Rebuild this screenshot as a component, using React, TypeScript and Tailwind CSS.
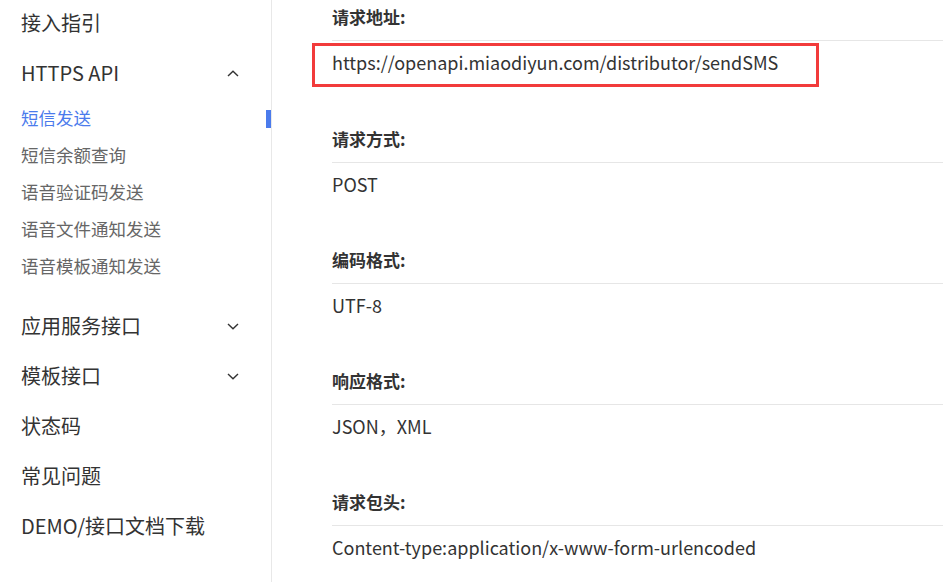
import React from 'react';

const font = { fontFamily: '"Noto Sans CJK SC", sans-serif' };

const ChevronUp = () => (
  <svg width="12" height="7" viewBox="0 0 12 7" fill="none" className="text-[#333]">
    <path d="M1 6L6 1.2L11 6" stroke="currentColor" strokeWidth="1.4" />
  </svg>
);

const ChevronDown = () => (
  <svg width="12" height="7" viewBox="0 0 12 7" fill="none" className="text-[#333]">
    <path d="M1 1L6 5.8L11 1" stroke="currentColor" strokeWidth="1.4" />
  </svg>
);

const subItems = ['短信发送', '短信余额查询', '语音验证码发送', '语音文件通知发送', '语音模板通知发送'];

const sections = [
  { title: '请求方式:', value: 'POST' },
  { title: '编码格式:', value: 'UTF-8' },
  { title: '响应格式:', value: 'JSON，XML' },
  { title: '请求包头:', value: 'Content-type:application/x-www-form-urlencoded' },
];

const App: React.FC = () => {
  return (
    <div className="flex h-[582px] w-[943px] overflow-hidden bg-white" style={font}>
      {/* Sidebar */}
      <aside className="w-[272px] shrink-0 border-r border-[#e8e8e8] text-[#333]">
        <div className="flex h-[46px] items-center pl-[21px] text-[20px]">接入指引</div>
        <div className="flex h-[54px] items-center justify-between pl-[21px] pr-[32px] text-[20px]">
          <span>HTTPS API</span>
          <ChevronUp />
        </div>
        <div className="flex flex-col">
          {subItems.map((item, i) => (
            <div key={item} className="flex h-[37px] items-center justify-between pl-[21px] text-[17.5px]">
              <span className={i === 0 ? 'text-[#4b7bec]' : 'text-[#666]'}>{item}</span>
              {i === 0 && <span className="h-[18px] w-[5px] bg-[#4b7bec]" />}
            </div>
          ))}
        </div>
        <div className="mt-[16px] flex h-[50px] items-center justify-between pl-[21px] pr-[32px] text-[20px]">
          <span>应用服务接口</span>
          <ChevronDown />
        </div>
        <div className="flex h-[50px] items-center justify-between pl-[21px] pr-[32px] text-[20px]">
          <span>模板接口</span>
          <ChevronDown />
        </div>
        <div className="flex h-[50px] items-center pl-[21px] text-[20px]">状态码</div>
        <div className="flex h-[50px] items-center pl-[21px] text-[20px]">常见问题</div>
        <div className="flex h-[50px] items-center pl-[21px] text-[20px]">DEMO/接口文档下载</div>
      </aside>

      {/* Content */}
      <main className="flex-1 pl-[60px] text-[#333]">
        <section className="mb-[35px]">
          <div className="border-b border-[#e6e6e6] pb-[11px] pt-[5px] text-[17px] font-bold leading-[24px]">请求地址:</div>
          <div className="-ml-[20px] mt-[2px] h-[44px] w-[507px] border-[3px] border-[#f23b3b] pl-[17px] pt-[4px] text-[18px] leading-[24px]">
            https://openapi.miaodiyun.com/distributor/sendSMS
          </div>
        </section>
        {sections.map((s) => (
          <section key={s.title} className="mb-[47px]">
            <div className="border-b border-[#e6e6e6] pb-[11px] pt-[5px] text-[17px] font-bold leading-[24px]">{s.title}</div>
            <div className="pt-[9px] text-[18px] leading-[24px]">{s.value}</div>
          </section>
        ))}
      </main>
    </div>
  );
};

export default App;
